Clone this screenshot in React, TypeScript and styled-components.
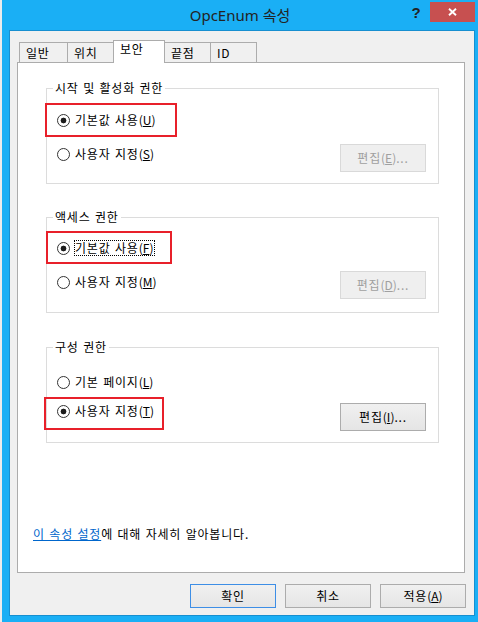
import React from 'react';
import styled, { createGlobalStyle } from 'styled-components';

const Global = createGlobalStyle`
  html, body { margin: 0; padding: 0; }
  body {
    background: #ececec;
    width: 478px;
    height: 622px;
    overflow: hidden;
    font-family: "Noto Sans CJK KR", "Noto Sans", sans-serif;
    font-size: 12px;
    letter-spacing: 0.8px;
    word-spacing: 1px;
    color: #000;
  }
`;

const Window = styled.div`
  margin-left: 2px;
  width: 476px;
  height: 622px;
  box-sizing: border-box;
  background: #1aaff5;
  padding: 0 3px 6px 7px;
  display: flex;
  flex-direction: column;
`;

const TitleBar = styled.div`
  height: 30px;
  flex: none;
  display: grid;
  grid-template-columns: 1fr auto 1fr;
  align-items: start;
`;

const Title = styled.div`
  grid-column: 2;
  margin-right: 4px;
  padding-top: 5px;
  font-family: "Noto Sans", "Noto Sans CJK KR", sans-serif;
  font-size: 15px;
  line-height: 20px;
  letter-spacing: 0;
  word-spacing: 0;
  color: #232323;
  white-space: nowrap;
`;

const Controls = styled.div`
  grid-column: 3;
  justify-self: end;
  display: flex;
  align-items: flex-start;
`;

const HelpButton = styled.div`
  width: 28px;
  height: 22px;
  display: flex;
  align-items: center;
  justify-content: center;
  font-family: "Liberation Sans", sans-serif;
  font-weight: bold;
  font-size: 15px;
  letter-spacing: 0;
  color: #222;
  padding-top: 2px;
  box-sizing: border-box;
`;

const CloseButton = styled.div`
  margin-top: 2px;
  width: 45px;
  height: 20px;
  background: #c75050;
  display: flex;
  align-items: center;
  justify-content: center;
`;

const Client = styled.div`
  flex: 1;
  border: 1px solid #168fd0;
  background: #f0f0f0;
  display: flex;
  flex-direction: column;
  padding-top: 9px;
`;

const TabRow = styled.div`
  display: flex;
  align-items: flex-end;
  height: 23px;
  margin-left: 9px;
  margin-bottom: -1px;
  position: relative;
  z-index: 1;
`;

const Tab = styled.div<{ $w: number; $active?: boolean }>`
  box-sizing: border-box;
  width: ${p => p.$w}px;
  height: ${p => (p.$active ? 23 : 20)}px;
  margin-bottom: ${p => (p.$active ? 0 : 1)}px;
  margin-left: -1px;
  &:first-child { margin-left: 0; }
  border: 1px solid #acacac;
  border-bottom: none;
  background: ${p => (p.$active ? '#fff' : '#f0f0f0')};
  position: relative;
  z-index: ${p => (p.$active ? 2 : 1)};
  padding: ${p => (p.$active ? '0' : '2px')} 0 0 6px;
  line-height: 16px;
  white-space: nowrap;
`;

const Panel = styled.div`
  margin-left: 7px;
  width: 448px;
  height: 511px;
  box-sizing: border-box;
  border: 1px solid #acacac;
  background: #fff;
  padding-top: 17px;
  display: flex;
  flex-direction: column;
`;

const Group = styled.fieldset<{ $mt: number }>`
  margin: ${p => p.$mt}px 0 0 28px;
  padding: 0 12px 0 10px;
  width: 393px;
  height: 104px;
  box-sizing: border-box;
  border: 1px solid #dcdcdc;
  min-width: 0;
  display: flex;
  flex-direction: column;
`;

const Legend = styled.legend`
  margin-left: -4px;
  padding: 0 2px;
  line-height: 16px;
  font-size: 12px;
  color: #000;
`;

const Row = styled.div<{ $mt: number }>`
  margin-top: ${p => p.$mt}px;
  display: flex;
  justify-content: space-between;
  align-items: flex-start;
`;

const RadioLabel = styled.label<{ $offset?: number }>`
  position: relative;
  display: flex;
  align-items: center;
  height: 16px;
  gap: 4px;
  margin-top: ${p => p.$offset ?? 0}px;
  white-space: nowrap;
`;

const Circle = styled.span<{ $checked?: boolean }>`
  width: 13px;
  height: 13px;
  box-sizing: border-box;
  border-radius: 50%;
  border: 1px solid #333;
  background: ${p =>
    p.$checked
      ? 'radial-gradient(circle, #1c1c1c 0 2.6px, #fff 3.2px)'
      : '#fff'};
`;

const LabelText = styled.span<{ $focus?: boolean }>`
  border: 1px ${p => (p.$focus ? 'dotted #000' : 'solid transparent')};
  line-height: 14px;
  padding: 0 1px 0 0;
`;

const Key = styled.span`
  letter-spacing: 0;
`;

const Highlight = styled.span<{ $t: number; $l: number; $w: number; $h: number }>`
  position: absolute;
  top: ${p => p.$t}px;
  left: ${p => p.$l}px;
  width: ${p => p.$w}px;
  height: ${p => p.$h}px;
  box-sizing: border-box;
  border: 2px solid #e8202a;
  pointer-events: none;
`;

const Button = styled.button<{ $h?: number; $default?: boolean }>`
  width: 86px;
  height: ${p => p.$h ?? 28}px;
  box-sizing: border-box;
  padding: 0;
  font-family: "Noto Sans CJK KR", "Noto Sans", sans-serif;
  font-size: 12px;
  letter-spacing: 0.8px;
  line-height: 16px;
  color: #000;
  border: 1px solid ${p => (p.$default ? '#3d8ee6' : '#acacac')};
  background: linear-gradient(#f0f0f0, #e5e5e5);
  &:disabled {
    color: #a0a0a0;
    border-color: #d9d9d9;
    background: #efefef;
  }
`;

const Info = styled.p`
  margin: 83px 0 0 15px;
  line-height: 16px;
  white-space: nowrap;
`;

const InfoLink = styled.a`
  color: #0066cc;
  text-decoration: underline;
`;

const Footer = styled.div`
  margin-top: 11px;
  display: flex;
  justify-content: flex-end;
  gap: 9px;
  padding-right: 8px;
`;

type HL = { t: number; l: number; w: number; h: number };

const Mnemonic: React.FC<{ k: string }> = ({ k }) => (
  <Key>
    (<u>{k}</u>)
  </Key>
);

const Radio: React.FC<{
  checked?: boolean;
  focus?: boolean;
  offset?: number;
  hl?: HL;
  children: React.ReactNode;
}> = ({ checked, focus, offset, hl, children }) => (
  <RadioLabel $offset={offset}>
    <Circle $checked={checked} />
    <LabelText $focus={focus}>{children}</LabelText>
    {hl && <Highlight $t={hl.t} $l={hl.l} $w={hl.w} $h={hl.h} />}
  </RadioLabel>
);

const tabs = [
  { label: '일반', w: 49 },
  { label: '위치', w: 47 },
  { label: '보안', w: 52, active: true },
  { label: '끝점', w: 47 },
  { label: 'ID', w: 47 },
];

export default function App() {
  return (
    <>
      <Global />
      <Window>
        <TitleBar>
          <Title>OpcEnum 속성</Title>
          <Controls>
            <HelpButton>?</HelpButton>
            <CloseButton>
              <svg width="9" height="8" viewBox="0 0 9 8">
                <path d="M1 0.8 L8 7.2 M8 0.8 L1 7.2" stroke="#fff" strokeWidth="1.9" />
              </svg>
            </CloseButton>
          </Controls>
        </TitleBar>
        <Client>
          <TabRow>
            {tabs.map(t => (
              <Tab key={t.label} $w={t.w} $active={t.active}>
                {t.label}
              </Tab>
            ))}
          </TabRow>
          <Panel>
            <Group $mt={0}>
              <Legend>시작 및 활성화 권한</Legend>
              <Row $mt={16}>
                <Radio checked hl={{ t: -9, l: -12, w: 132, h: 34 }}>
                  기본값 사용<Mnemonic k="U" />
                </Radio>
              </Row>
              <Row $mt={16}>
                <Radio offset={2}>
                  사용자 지정<Mnemonic k="S" />
                </Radio>
                <Button disabled>
                  편집<Mnemonic k="E" />...
                </Button>
              </Row>
            </Group>

            <Group $mt={25}>
              <Legend>액세스 권한</Legend>
              <Row $mt={15}>
                <Radio checked focus hl={{ t: -9, l: -11, w: 126, h: 33 }}>
                  기본값 사용<Mnemonic k="F" />
                </Radio>
              </Row>
              <Row $mt={15}>
                <Radio offset={3}>
                  사용자 지정<Mnemonic k="M" />
                </Radio>
                <Button disabled>
                  편집<Mnemonic k="D" />...
                </Button>
              </Row>
            </Group>

            <Group $mt={26}>
              <Legend>구성 권한</Legend>
              <Row $mt={19}>
                <Radio>
                  기본 페이지<Mnemonic k="L" />
                </Radio>
              </Row>
              <Row $mt={13}>
                <Radio checked offset={0} hl={{ t: -6, l: -13, w: 120, h: 33 }}>
                  사용자 지정<Mnemonic k="T" />
                </Radio>
                <Button>
                  편집<Mnemonic k="I" />...
                </Button>
              </Row>
            </Group>

            <Info>
              <InfoLink href="#">이 속성 설정</InfoLink>에 대해 자세히 알아봅니다.
            </Info>
          </Panel>
          <Footer>
            <Button $h={24} $default>
              확인
            </Button>
            <Button $h={24}>취소</Button>
            <Button $h={24}>
              적용<Mnemonic k="A" />
            </Button>
          </Footer>
        </Client>
      </Window>
    </>
  );
}
